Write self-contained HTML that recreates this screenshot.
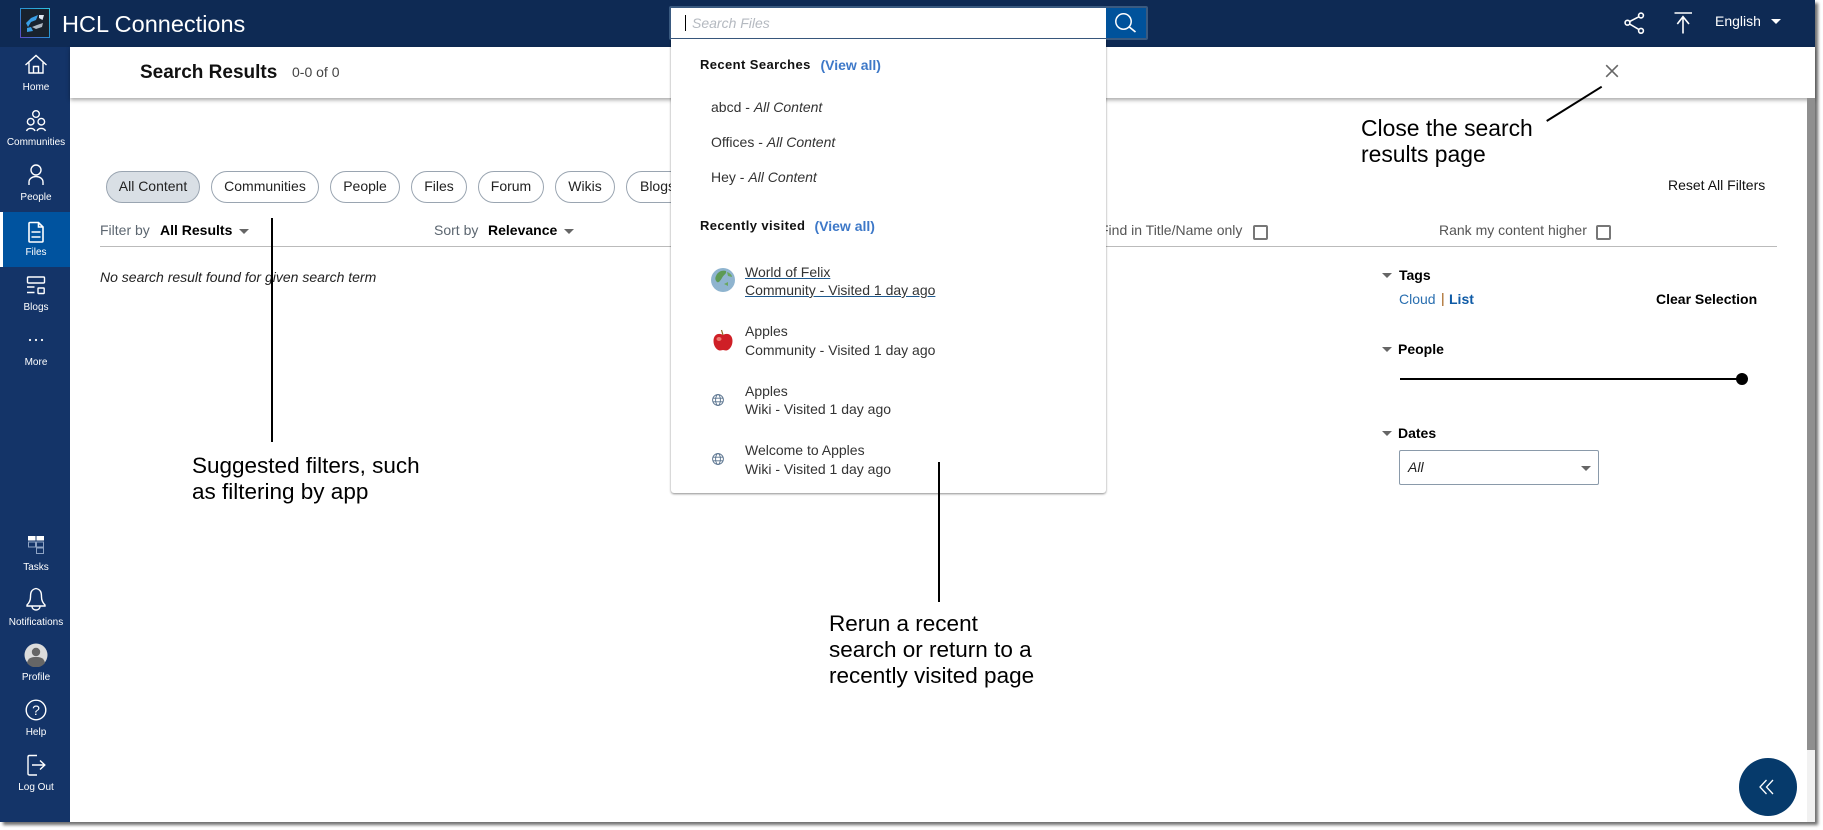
<!DOCTYPE html>
<html lang="en"><head><meta charset="utf-8"><title>HCL Connections Search Results</title>
<style>
*{box-sizing:border-box}
html,body{margin:0;padding:0;width:1823px;height:830px;overflow:hidden;background:#fff;font-family:"Liberation Sans",Arial,sans-serif}
.a{position:absolute}
.t{position:absolute;white-space:nowrap;line-height:16px;font-size:14px;color:#333}
#page{position:absolute;left:0;top:0;width:1815px;height:822px;background:#fff;box-shadow:3px 3px 3px #6f6f6f}
#hdr{position:absolute;left:0;top:0;width:1815px;height:47px;background:#0e2a54}
#side{position:absolute;left:0;top:47px;width:70px;height:775px;background:#143468}
#band{position:absolute;left:70px;top:47px;width:1745px;height:51px;background:#fff;box-shadow:0 2px 4px rgba(0,0,0,.35)}
#sb{position:absolute;left:1807px;top:98px;width:8px;height:724px;background:#f1f1f1}
#th{position:absolute;left:1807px;top:98px;width:8px;height:652px;background:#8f8f8f}
.lb{position:absolute;left:0;width:72px;text-align:center;color:#fff;font-size:10px;line-height:12px;white-space:nowrap}
.chip{position:absolute;top:171px;height:32px;border:1px solid #9aa5b1;border-radius:16px;background:#fff;text-align:center;font-size:14px;line-height:29px;color:#222;white-space:nowrap}
.car{position:absolute;width:0;height:0;border-left:5px solid transparent;border-right:5px solid transparent;border-top:5px solid #666}
.cb{position:absolute;width:15px;height:15px;border:2px solid #777;border-radius:2px;background:#fff}
.bl{color:#000;font-weight:bold}
.note{position:absolute;font-size:22.5px;line-height:26px;color:#000;white-space:nowrap}
.ln{position:absolute;background:#000;width:2px}
#dd{position:absolute;left:671px;top:39px;width:435px;height:454px;background:#fff;border-radius:0 0 3px 3px;box-shadow:0 1px 2px rgba(0,0,0,.45)}
.hd{letter-spacing:.4px;font-size:13px;font-weight:bold;color:#111}
.va{font-weight:bold;color:#3d78c8;font-size:14px}
.u{text-decoration:underline;text-decoration-color:#1e5a90}
</style></head><body>
<div id="page"></div>
<div id="hdr"></div>
<div id="side"></div>
<div class="a" style="left:0;top:212px;width:70px;height:55px;background:#00539f"></div>
<div class="a" style="left:0;top:212px;width:3px;height:55px;background:#fff"></div>
<div id="band"></div>
<div id="sb"></div><div id="th"></div>

<!-- logo -->
<svg class="a" style="left:20px;top:8px" width="30" height="30" viewBox="0 0 30 30">
<defs><linearGradient id="lg" x1="0" y1="1" x2="1" y2="0"><stop offset="0" stop-color="#5b4bc4"/><stop offset=".5" stop-color="#2a8fd0"/><stop offset="1" stop-color="#2fc0e0"/></linearGradient></defs>
<rect x=".5" y=".5" width="29" height="29" fill="#18222e" stroke="url(#lg)"/>
<path d="M18 7 L11 10 L6 15 L8 19 L11 14 L16 12 Z" fill="#3a9fe6"/>
<path d="M19 7 L24 7 L22.5 12 L19 10 Z" fill="#dfe8f0"/>
<path d="M7 20 L11 19 L13 23 L7 24 Z" fill="#3a9fe6"/>
<path d="M23 15 L22 19 L16 21 L12 19 L17 17 Z" fill="#aeb8c2"/>
</svg>
<div class="t" style="left:62px;top:11px;font-size:23.5px;line-height:26px;color:#fff">HCL Connections</div>

<!-- search bar -->
<div class="a" style="left:669px;top:6px;width:479px;height:34px;background:#3a5a80;border-radius:2px"></div>
<div class="a" style="left:671px;top:8px;width:435px;height:30px;background:#fff"></div>
<div class="a" style="left:1106px;top:8px;width:40px;height:30px;background:#00529b"></div>
<svg class="a" style="left:1106px;top:8px" width="40" height="30" viewBox="1106 8 40 30"><circle cx="1123.5" cy="21.5" r="7.7" fill="none" stroke="#fff" stroke-width="1.5"/><path d="M1129.3 27 L1135.5 32" stroke="#fff" stroke-width="1.7" fill="none"/></svg>

<!-- header right -->
<svg class="a" style="left:1620px;top:8px" width="80" height="30" viewBox="1620 8 80 30" fill="none" stroke="#fff" stroke-width="1.6">
<circle cx="1641" cy="15.5" r="2.4"/><circle cx="1627.5" cy="22.7" r="2.4"/><circle cx="1641" cy="30.8" r="2.4"/>
<path d="M1639 16.7 L1629.6 21.6 M1629.6 24 L1639 29.6"/>
<path d="M1674.5 13 H1692 M1677.3 24 L1683 16.7 L1689 24 M1683 17 V33.5"/>
</svg>
<div class="t" style="left:1715px;top:13px;color:#fff">English</div>
<div class="car" style="left:1771px;top:19px;border-top-color:#fff"></div>

<!-- sidebar icons -->
<svg class="a" style="left:0;top:47px" width="70" height="775" viewBox="0 47 70 775" fill="none" stroke="#fff" stroke-width="1.4">
<path d="M25.5 65 L36 55.5 L46.5 65 M29 62.5 V73 H43 V62.5 M33.5 73 V66.5 H38.5 V73"/>
<circle cx="36" cy="114" r="3.3"/><circle cx="30.7" cy="121.7" r="3.3"/><circle cx="41.3" cy="121.7" r="3.3"/>
<path d="M26.5 131 A4.5 3.8 0 0 1 35 131 M37 131 A4.5 3.8 0 0 1 45.5 131"/>
<circle cx="36" cy="170" r="5"/><path d="M29 185 V182 A7 5.5 0 0 1 43 182 V185"/>
<path d="M29 223.5 Q29 222.5 30 222.5 H38.5 L43 227 V241 Q43 242 42 242 H30 Q29 242 29 241 Z M38.5 222.5 V227 H43" stroke-width="1.6"/>
<path d="M31.5 232 H40.5 M31.5 237 H40.5"/>
<rect x="27.5" y="277" width="17" height="6" rx="1"/><path d="M27 287 H34.5 M27 292.5 H34.5"/><rect x="38" y="288" width="6.2" height="5.5" rx=".5"/>
<g fill="#fff" stroke="none"><circle cx="30" cy="340" r="1.1"/><circle cx="36" cy="340" r="1.1"/><circle cx="42" cy="340" r="1.1"/>
<rect x="28" y="536" width="7.5" height="4.5"/><rect x="36.5" y="536" width="7.5" height="4.5"/></g>
<g stroke="#8ea3c4" stroke-width="1"><rect x="28.5" y="542" width="7" height="5"/><rect x="36.5" y="542" width="7" height="5"/><rect x="36.5" y="548" width="7" height="5.5"/></g>
<path d="M36 588.5 C31 589.5 30.5 593 30.5 597 C30.5 601 29 603 27 605 V606 H45 V605 C43 603 41.5 601 41.5 597 C41.5 593 41 589.5 36 588.5 Z M32 606.5 A4 3.5 0 0 0 40 606.5"/>
<circle cx="36" cy="710" r="9.8"/>
<path d="M37 755.5 H29.5 Q28 755.5 28 757 V773.5 Q28 775 29.5 775 H37 M32 765 H44.5 M40 760.5 L44.8 765 L40 769.5"/>
</svg>
<div class="t" style="left:26px;top:702px;width:20px;text-align:center;font-size:14px;color:#fff">?</div>
<svg class="a" style="left:24px;top:643px" width="24" height="24" viewBox="0 0 24 24"><circle cx="12" cy="12" r="11.5" fill="#dcdcdc"/><circle cx="12" cy="9" r="4.2" fill="#666"/><path d="M3 20 C4 14.5 8 14 12 14 C16 14 20 14.5 21 20 A11.5 11.5 0 0 1 3 20 Z" fill="#666"/></svg>

<div class="lb" style="top:82px">Home</div>
<div class="lb" style="top:137px">Communities</div>
<div class="lb" style="top:192px">People</div>
<div class="lb" style="top:247px">Files</div>
<div class="lb" style="top:302px">Blogs</div>
<div class="lb" style="top:357px">More</div>
<div class="lb" style="top:562px">Tasks</div>
<div class="lb" style="top:617px">Notifications</div>
<div class="lb" style="top:672px">Profile</div>
<div class="lb" style="top:727px">Help</div>
<div class="lb" style="top:782px">Log Out</div>

<!-- band -->
<div class="t" style="left:140px;top:62px;font-size:19px;line-height:22px;font-weight:bold;color:#111">Search Results</div>
<div class="t" style="left:292px;top:64px;color:#444">0-0 of 0</div>
<svg class="a" style="left:1604px;top:63px" width="16" height="16" viewBox="0 0 16 16"><path d="M2.2 2.2 L13.8 13.8 M13.8 2.2 L2.2 13.8" stroke="#666" stroke-width="1.6"/></svg>

<!-- chips -->
<div class="chip" style="left:106px;width:94px;background:#d9dfe5">All Content</div>
<div class="chip" style="left:211px;width:108px">Communities</div>
<div class="chip" style="left:330px;width:70px">People</div>
<div class="chip" style="left:411px;width:56px">Files</div>
<div class="chip" style="left:478px;width:66px">Forum</div>
<div class="chip" style="left:555px;width:60px">Wikis</div>
<div class="chip" style="left:626px;width:63px">Blogs</div>

<!-- filter row -->
<div class="t" style="left:100px;top:222px;color:#5c6670">Filter by</div>
<div class="t bl" style="left:160px;top:222px">All Results</div>
<div class="car" style="left:239px;top:229px"></div>
<div class="t" style="left:434px;top:222px;color:#5c6670">Sort by</div>
<div class="t bl" style="left:488px;top:222px">Relevance</div>
<div class="car" style="left:564px;top:229px"></div>
<div class="t" style="left:1100px;top:222px;color:#555">Find in Title/Name only</div>
<div class="cb" style="left:1253px;top:225px"></div>
<div class="t" style="left:1439px;top:222px;color:#555">Rank my content higher</div>
<div class="cb" style="left:1596px;top:225px"></div>
<div class="a" style="left:100px;top:246px;width:1677px;height:1px;background:#bbb"></div>
<div class="t" style="left:100px;top:269px;font-style:italic;color:#222">No search result found for given search term</div>
<div class="t" style="left:1668px;top:177px;color:#111">Reset All Filters</div>

<!-- right panel -->
<div class="car" style="left:1381.5px;top:273px"></div>
<div class="t bl" style="left:1399px;top:267px">Tags</div>
<div class="t" style="left:1399px;top:291px;color:#2a6fb0">Cloud</div>
<div class="t" style="left:1441px;top:290px;color:#a05a10">|</div>
<div class="t" style="left:1449px;top:291px;font-weight:bold;color:#0f5ba6">List</div>
<div class="t bl" style="left:1656px;top:291px">Clear Selection</div>
<div class="car" style="left:1381.5px;top:347px"></div>
<div class="t bl" style="left:1398px;top:341px">People</div>
<div class="a" style="left:1400px;top:378px;width:342px;height:2px;background:#000"></div>
<div class="a" style="left:1736px;top:373px;width:12px;height:12px;border-radius:50%;background:#000"></div>
<div class="car" style="left:1381.5px;top:431px"></div>
<div class="t bl" style="left:1398px;top:425px">Dates</div>
<div class="a" style="left:1399px;top:450px;width:200px;height:35px;border:1px solid #8a9aaa;border-radius:2px;background:#fff"></div>
<div class="t" style="left:1408px;top:459px;font-style:italic;color:#222">All</div>
<div class="car" style="left:1581px;top:466px"></div>

<!-- dropdown -->
<div id="dd"></div>
<div class="a" style="left:685px;top:15px;width:1px;height:16px;background:#000"></div>
<div class="t" style="left:692px;top:15px;font-style:italic;color:#b4b9c0">Search Files</div>
<div class="t hd" style="left:700px;top:57px">Recent Searches</div>
<div class="t va" style="left:820.5px;top:57px">(View all)</div>
<div class="t" style="left:711px;top:99px">abcd - <i>All Content</i></div>
<div class="t" style="left:711px;top:134px">Offices - <i>All Content</i></div>
<div class="t" style="left:711px;top:169px">Hey - <i>All Content</i></div>
<div class="t hd" style="left:700px;top:218px">Recently visited</div>
<div class="t va" style="left:814.5px;top:218px">(View all)</div>

<svg class="a" style="left:711px;top:268px" width="24" height="24" viewBox="0 0 24 24"><circle cx="12" cy="12" r="12" fill="#8fb4cf"/><path d="M5 8 C7 3 12 2 15 3 C16 6 12 7 11 10 C9 13 8 15 6 14 C4 12 4 10 5 8 Z" fill="#5d9a55"/><path d="M16 4 C19 5 21 7 21 9 L17 8 Z M13 16 L17 14 L17 18 Z" fill="#6aa760"/></svg>
<div class="t u" style="left:745px;top:264px">World of Felix</div>
<div class="t u" style="left:745px;top:282px">Community - Visited 1 day ago</div>

<svg class="a" style="left:713px;top:329px" width="20" height="22" viewBox="0 0 20 22"><path d="M10 6 C6 3.5 0.5 5 0.5 12 C0.5 18 4.5 21.5 7 21.5 C8.5 21.5 9 21 10 21 C11 21 11.5 21.5 13 21.5 C15.5 21.5 19.5 18 19.5 12 C19.5 5 14 3.5 10 6 Z" fill="#cf1f26"/><ellipse cx="6" cy="10" rx="2.5" ry="2" fill="#ec7a70"/><path d="M10 6 L8.5 1" stroke="#8a6a20" stroke-width="1.2" fill="none"/></svg>
<div class="t" style="left:745px;top:323px">Apples</div>
<div class="t" style="left:745px;top:342px">Community - Visited 1 day ago</div>

<svg class="a" style="left:712px;top:394px" width="12" height="12" viewBox="0 0 12 12" fill="none" stroke="#56708c" stroke-width=".9"><circle cx="6" cy="6" r="5.4"/><ellipse cx="6" cy="6" rx="2.4" ry="5.4"/><path d="M.8 4.2 H11.2 M.8 7.8 H11.2"/></svg>
<div class="t" style="left:745px;top:383px">Apples</div>
<div class="t" style="left:745px;top:401px">Wiki - Visited 1 day ago</div>

<svg class="a" style="left:712px;top:453px" width="12" height="12" viewBox="0 0 12 12" fill="none" stroke="#56708c" stroke-width=".9"><circle cx="6" cy="6" r="5.4"/><ellipse cx="6" cy="6" rx="2.4" ry="5.4"/><path d="M.8 4.2 H11.2 M.8 7.8 H11.2"/></svg>
<div class="t" style="left:745px;top:442px">Welcome to Apples</div>
<div class="t" style="left:745px;top:461px">Wiki - Visited 1 day ago</div>

<!-- FAB -->
<div class="a" style="left:1739px;top:758px;width:58px;height:58px;border-radius:50%;background:#063a6b"></div>
<svg class="a" style="left:1758px;top:779px" width="20" height="16" viewBox="0 0 20 16" fill="none" stroke="#fff" stroke-width="1.3"><path d="M8.5 1 L2 8 L8.5 15 M15 1 L8.5 8 L15 15"/></svg>

<!-- annotations -->
<div class="ln" style="left:271px;top:218px;height:224px"></div>
<div class="note" style="left:192px;top:453px">Suggested filters, such<br>as filtering by app</div>
<div class="ln" style="left:938px;top:462px;height:140px"></div>
<div class="note" style="left:829px;top:611px">Rerun a recent<br>search or return to a<br>recently visited page</div>
<svg class="a" style="left:1540px;top:80px" width="70" height="50" viewBox="1540 80 70 50"><path d="M1546.7 121 L1601.7 86.7" stroke="#000" stroke-width="2"/></svg>
<div class="note" style="left:1361px;top:115px;font-size:22.9px">Close the search<br>results page</div>
</body></html>
